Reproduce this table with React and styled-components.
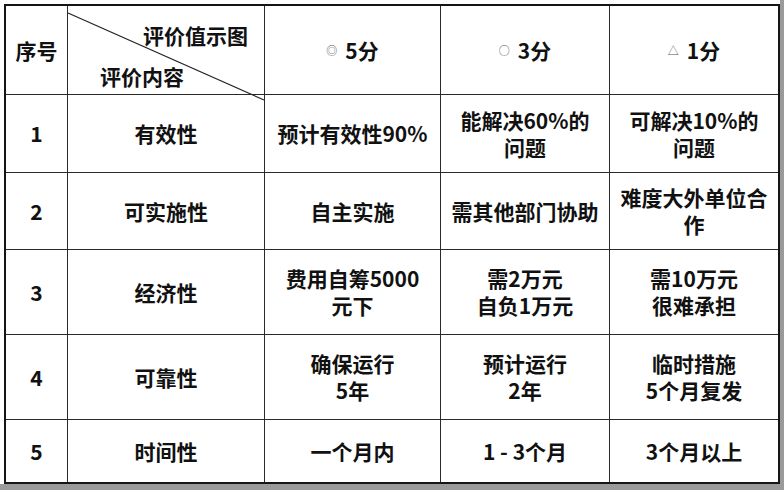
import React from 'react'
import styled, { createGlobalStyle } from 'styled-components'

const GlobalStyle = createGlobalStyle`
  html, body {
    margin: 0;
    padding: 0;
    background: #9a9a9a;
  }
  body {
    font-family: "Noto Sans CJK SC", "Noto Sans", sans-serif;
  }
`

const Frame = styled.div`
  width: 784px;
  height: 490px;
  background: #9a9a9a;
  overflow: hidden;
`

const Sheet = styled.div`
  width: 780px;
  height: 484px;
  background: #fff;
  padding: 4px 0 0 4px;
  box-sizing: border-box;
`

const Table = styled.div`
  display: grid;
  grid-template-columns: 62px 197px 176px 169px 168px;
  grid-template-rows: 89px 78px 77px 85px 85px 62px;
  width: 776px;
  height: 480px;
  box-sizing: border-box;
  border: 2px solid #151515;
  color: #111;
  font-weight: 700;
  font-size: 21px;
  line-height: 27px;
`

const Cell = styled.div`
  display: flex;
  align-items: center;
  justify-content: center;
  text-align: center;
  box-sizing: border-box;
  border-right: ${(p) => (p.$lastCol ? 'none' : '1px solid #2a2a2a')};
  border-bottom: ${(p) => (p.$lastRow ? 'none' : '1px solid #2a2a2a')};
  padding: 0 4px;
`

const CornerCell = styled(Cell)`
  position: relative;
  flex-direction: column;
  align-items: stretch;
  justify-content: space-between;
  padding: 16px 16px 4px 32px;
`

const CornerTop = styled.span`
  align-self: flex-end;
  position: relative;
  z-index: 1;
`

const CornerBottom = styled.span`
  align-self: flex-start;
  position: relative;
  z-index: 1;
`

const Diagonal = styled.svg`
  position: absolute;
  left: 0;
  top: 0;
  overflow: visible;
  pointer-events: none;
`

const Score = styled.span`
  display: inline-flex;
  align-items: center;
  gap: 8px;
`

const Mark = styled.span`
  font-size: 11px;
  line-height: 11px;
  font-weight: 400;
  color: #555;
`

const scores = [
  { mark: '◎', label: '5分' },
  { mark: '○', label: '3分' },
  { mark: '△', label: '1分' },
]

const rows = [
  ['1', '有效性', ['预计有效性90%'], ['能解决60%的', '问题'], ['可解决10%的', '问题']],
  ['2', '可实施性', ['自主实施'], ['需其他部门协助'], ['难度大外单位合', '作']],
  ['3', '经济性', ['费用自筹5000', '元下'], ['需2万元', '自负1万元'], ['需10万元', '很难承担']],
  ['4', '可靠性', ['确保运行', '5年'], ['预计运行', '2年'], ['临时措施', '5个月复发']],
  ['5', '时间性', ['一个月内'], ['1 - 3个月'], ['3个月以上']],
]

function Lines({ lines }) {
  return (
    <div>
      {lines.map((l, i) => (
        <div key={i}>{l}</div>
      ))}
    </div>
  )
}

export default function App() {
  return (
    <Frame>
      <GlobalStyle />
      <Sheet>
        <Table>
          <Cell>序号</Cell>
          <CornerCell>
            <Diagonal width="197" height="89">
              <line x1="0" y1="7" x2="196" y2="94" stroke="#222" strokeWidth="1.2" />
            </Diagonal>
            <CornerTop>评价值示图</CornerTop>
            <CornerBottom>评价内容</CornerBottom>
          </CornerCell>
          {scores.map((s, i) => (
            <Cell key={s.label} $lastCol={i === scores.length - 1}>
              <Score>
                <Mark>{s.mark}</Mark>
                {s.label}
              </Score>
            </Cell>
          ))}
          {rows.map((r, ri) => {
            const lastRow = ri === rows.length - 1
            return (
              <React.Fragment key={r[0]}>
                <Cell $lastRow={lastRow}>{r[0]}</Cell>
                <Cell $lastRow={lastRow}>{r[1]}</Cell>
                <Cell $lastRow={lastRow}><Lines lines={r[2]} /></Cell>
                <Cell $lastRow={lastRow}><Lines lines={r[3]} /></Cell>
                <Cell $lastRow={lastRow} $lastCol><Lines lines={r[4]} /></Cell>
              </React.Fragment>
            )
          })}
        </Table>
      </Sheet>
    </Frame>
  )
}
